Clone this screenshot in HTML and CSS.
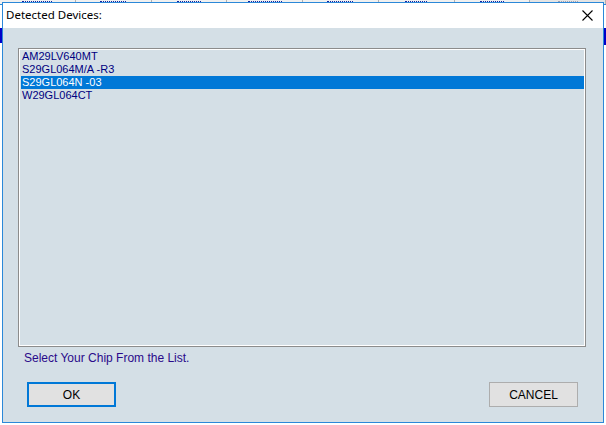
FILE: index.html
```html
<!DOCTYPE html>
<html>
<head>
<meta charset="utf-8">
<link rel="stylesheet" href="styles.css">
</head>
<body>
<div class="app">
  <div class="toolbar">
    <span class="tb"><i class="frag w30"></i></span><span class="tb"><i class="frag w26"></i></span><span class="tb"><i class="frag w24"></i></span><span class="tb"><i class="frag w34"></i></span><span class="tb"><i class="frag w26"></i></span><span class="tb"><i class="frag w22"></i></span><span class="tb"><i class="frag w24"></i></span><span class="tb gray"><i class="frag w20 light"></i></span>
  </div>
  <div class="side-right"><div class="blue-bar"></div></div>
  <div class="side-left"><div class="blue-bar-l"></div></div>
</div>
<div class="dialog">
  <div class="titlebar">
    <span class="title">Detected Devices:</span>
    <svg class="close" width="11" height="11" viewBox="0 0 11 11"><path d="M0.5 0.5L10.5 10.5M10.5 0.5L0.5 10.5" stroke="#000" stroke-width="1.1" fill="none"/></svg>
  </div>
  <div class="body">
    <div class="listbox">
      <div class="item">AM29LV640MT</div>
      <div class="item">S29GL064M/A -R3</div>
      <div class="item selected">S29GL064N -03</div>
      <div class="item">W29GL064CT</div>
    </div>
    <div class="hint">Select Your Chip From the List.</div>
    <div class="buttons">
      <button class="btn default">OK</button>
      <button class="btn">CANCEL</button>
    </div>
  </div>
</div>
</body>
</html>
```
FILE: styles.css
```css
html, body {
  margin: 0;
  padding: 0;
  width: 606px;
  height: 425px;
  overflow: hidden;
  background: #ffffff;
  font-family: "Liberation Sans", Arial, sans-serif;
}
.app {
  position: relative;
  width: 606px;
  height: 425px;
}
.toolbar {
  display: flex;
  height: 4px;
  overflow: hidden;
  background: #f0f0f0;
  border-bottom: 1px solid #2b88d8;
}
.tb {
  width: 76px;
  border-right: 1px solid #b0b0b0;
  display: flex;
  justify-content: center;
}
.tb.gray { background: #e4e4e4; }
.frag {
  display: block;
  height: 1px;
  margin-top: 1px;
  border-top: 1px dotted #1020a0;
}
.frag.light { border-top-color: #a0a0b0; }
.w20 { width: 20px; }
.w22 { width: 22px; }
.w24 { width: 24px; }
.w26 { width: 26px; }
.w30 { width: 30px; }
.w34 { width: 34px; }
.side-right {
  position: absolute;
  right: 0;
  top: 5px;
  width: 3px;
  height: 420px;
  background: #ffffff;
}
.blue-bar {
  margin-top: 23px;
  height: 17px;
  background: #0000c8;
}
.side-left {
  position: absolute;
  left: 0;
  top: 5px;
  width: 2px;
  height: 420px;
  background: #ffffff;
}
.blue-bar-l {
  margin-top: 23px;
  height: 15px;
  background: #0000c8;
}
.dialog {
  position: absolute;
  left: 2px;
  top: 2px;
  width: 600px;
  height: 419px;
  border: 1px solid #2b88d8;
  display: flex;
  flex-direction: column;
  background: #d4dfe6;
}
.titlebar {
  height: 25px;
  background: #ffffff;
  display: flex;
  align-items: center;
  justify-content: space-between;
  padding: 0 10px 0 3px;
  flex: none;
}
.title {
  font-family: "Noto Sans", "DejaVu Sans", sans-serif;
  font-size: 11.5px;
  color: #000;
  margin-top: -2px;
}
.close { display: block; margin-top: -1px; }
.body {
  flex: 1;
  display: flex;
  flex-direction: column;
  padding: 20px 17px 0 15px;
}
.listbox {
  height: 296px;
  border: 1px solid #8c8c8c;
  box-shadow: inset 1px 1px 0 #ffffff, inset -1px -1px 0 #ffffff;
  padding: 1px 1px 0 2px;
  background: #d4dfe6;
}
.item {
  font-size: 11px;
  line-height: 13px;
  height: 13px;
  color: #000080;
  padding-left: 1px;
}
.item.selected {
  background: #0078d7;
  color: #ffffff;
}
.hint {
  font-size: 12px;
  color: #2a0a8a;
  margin: 4px 0 0 6px;
  line-height: 14px;
}
.buttons {
  display: flex;
  justify-content: space-between;
  margin-top: 17px;
  padding: 0 8px 0 9px;
}
.btn {
  width: 89px;
  height: 25px;
  background: #e1e1e1;
  border: 1px solid #adadad;
  font-family: "Liberation Sans", Arial, sans-serif;
  font-size: 12px;
  color: #000;
  padding: 0;
  margin: 0;
}
.btn.default {
  border: 2px solid #0078d7;
}
```
